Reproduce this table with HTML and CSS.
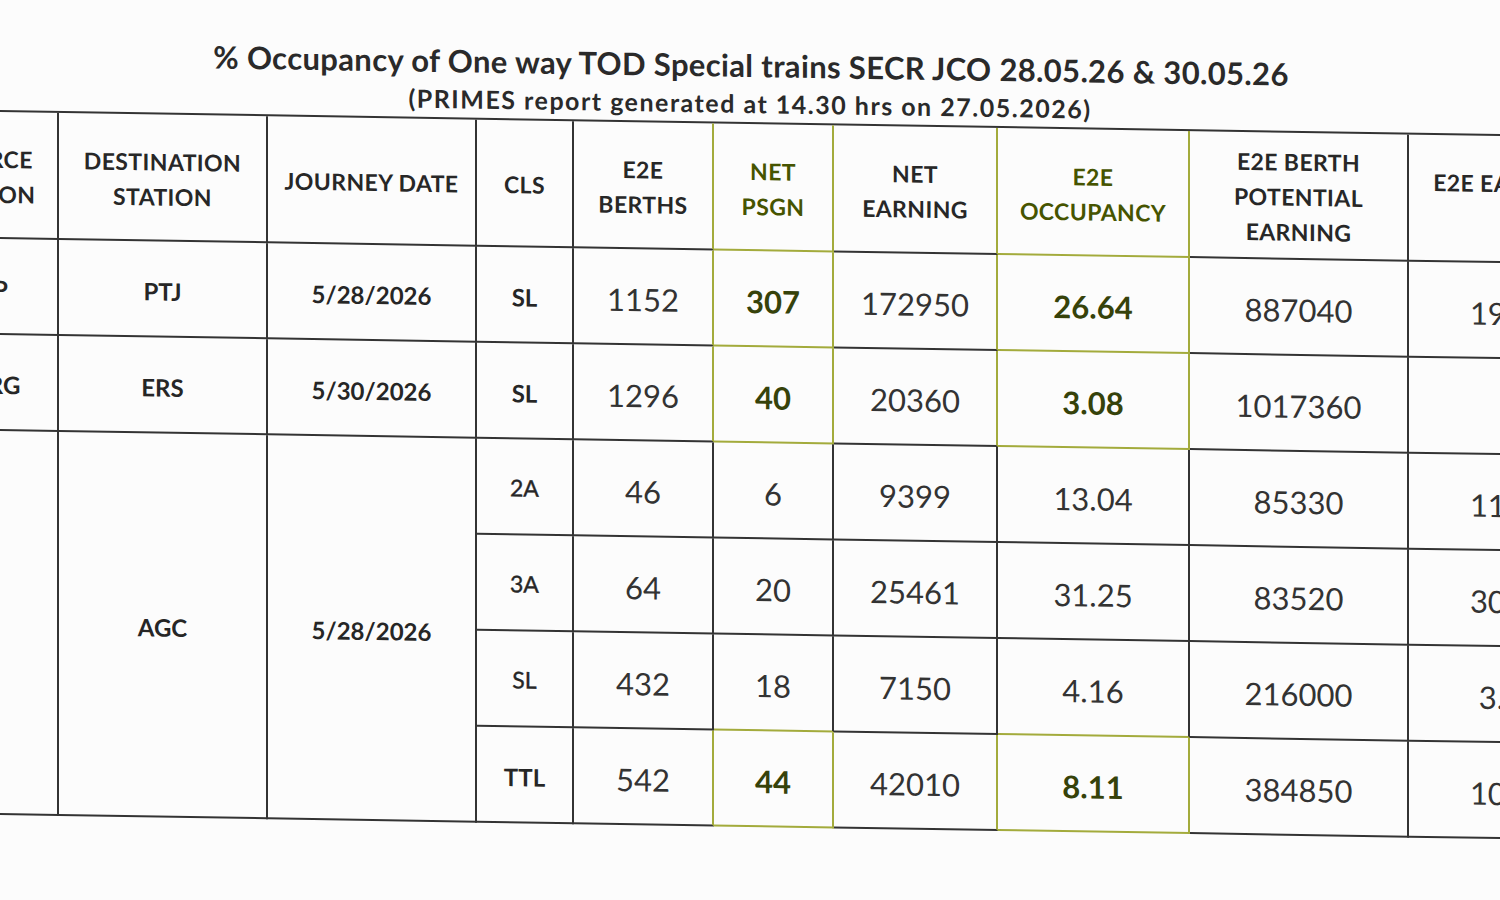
FILE: index.html
```html
<!DOCTYPE html>
<html lang="en">
<head>
<meta charset="utf-8">
<title>% Occupancy of One way TOD Special trains</title>
<link rel="stylesheet" href="styles.css">
</head>
<body>
<div class="page">
  <div class="sheet">
    <h1 class="title">% Occupancy of One way TOD Special trains SECR JCO 28.05.26 &amp; 30.05.26</h1>
    <p class="subtitle">(PRIMES report generated at 14.30 hrs on 27.05.2026)</p>
    <table class="occ">
      <colgroup>
        <col class="c1"><col class="c2"><col class="c3"><col class="c4"><col class="c5">
        <col class="c6"><col class="c7"><col class="c8"><col class="c9"><col class="c10">
      </colgroup>
      <thead>
        <tr class="head">
          <th>SOURCE<br>STATION</th>
          <th>DESTINATION<br>STATION</th>
          <th>JOURNEY DATE</th>
          <th>CLS</th>
          <th class="gl">E2E<br>BERTHS</th>
          <th class="g gtxt">NET<br>PSGN</th>
          <th class="gl">NET<br>EARNING</th>
          <th class="g gtxt">E2E<br>OCCUPANCY</th>
          <th>E2E BERTH<br>POTENTIAL<br>EARNING</th>
          <th>E2E EARNING<br>%</th>
        </tr>
      </thead>
      <tbody>
        <tr>
          <td class="lbl">BSP</td>
          <td class="lbl">PTJ</td>
          <td class="lbl">5/28/2026</td>
          <td class="lbl">SL</td>
          <td class="num gl">1152</td>
          <td class="num g hl">307</td>
          <td class="num gl">172950</td>
          <td class="num g hl">26.64</td>
          <td class="num">887040</td>
          <td class="num">19.50</td>
        </tr>
        <tr>
          <td class="lbl">DURG</td>
          <td class="lbl">ERS</td>
          <td class="lbl">5/30/2026</td>
          <td class="lbl">SL</td>
          <td class="num gl">1296</td>
          <td class="num g hl">40</td>
          <td class="num gl">20360</td>
          <td class="num g hl">3.08</td>
          <td class="num">1017360</td>
          <td class="num"></td>
        </tr>
        <tr>
          <td class="lbl" rowspan="4"></td>
          <td class="lbl" rowspan="4">AGC</td>
          <td class="lbl" rowspan="4">5/28/2026</td>
          <td class="cls">2A</td>
          <td class="num">46</td>
          <td class="num">6</td>
          <td class="num">9399</td>
          <td class="num">13.04</td>
          <td class="num">85330</td>
          <td class="num">11.01</td>
        </tr>
        <tr>
          <td class="cls">3A</td>
          <td class="num">64</td>
          <td class="num">20</td>
          <td class="num">25461</td>
          <td class="num">31.25</td>
          <td class="num">83520</td>
          <td class="num">30.48</td>
        </tr>
        <tr>
          <td class="cls">SL</td>
          <td class="num">432</td>
          <td class="num gt">18</td>
          <td class="num">7150</td>
          <td class="num gt">4.16</td>
          <td class="num">216000</td>
          <td class="num">3.31</td>
        </tr>
        <tr>
          <td class="lbl ttl">TTL</td>
          <td class="num gl">542</td>
          <td class="num g hl">44</td>
          <td class="num gl">42010</td>
          <td class="num g hl">8.11</td>
          <td class="num">384850</td>
          <td class="num">10.92</td>
        </tr>
      </tbody>
    </table>
  </div>
</div>
</body>
</html>
```

FILE: styles.css
```css
html, body {
  margin: 0;
  padding: 0;
  background: #fcfcfc;
}

.page {
  width: 1500px;
  height: 900px;
  overflow: hidden;
  font-family: "Lato", "Open Sans", "Liberation Sans", sans-serif;
  color: #262626;
}

.sheet {
  transform: skewY(0.92deg);
  transform-origin: 0 0;
  padding-top: 35px;
}

.title {
  margin: 0;
  text-align: center;
  font-size: 31px;
  line-height: 36px;
  font-weight: 700;
  letter-spacing: 0.35px;
  color: #2a2a2a;
  padding-left: 2px;
}

.subtitle {
  margin: 6px 0 0;
  text-align: center;
  font-size: 25px;
  line-height: 28px;
  font-weight: 700;
  letter-spacing: 1.5px;
  color: #2a2a2a;
}

.occ {
  margin-top: 5px;
  margin-left: -87px;
  border-collapse: separate;
  border-spacing: 0;
  table-layout: fixed;
  width: 1699px;
  border-top: 2px solid #333;
  border-left: 2px solid #333;
}

.c1 { width: 144px; }
.c2 { width: 209px; }
.c3 { width: 209px; }
.c4 { width: 97px; }
.c5 { width: 140px; }
.c6 { width: 120px; }
.c7 { width: 164px; }
.c8 { width: 192px; }
.c9 { width: 219px; }
.c10 { width: 203px; }

.occ th,
.occ td {
  box-sizing: border-box;
  padding: 0;
  text-align: center;
  vertical-align: middle;
  border-right: 2px solid #333;
  border-bottom: 2px solid #333;
}

.occ th {
  height: 127px;
  padding-top: 4px;
  font-size: 23px;
  line-height: 35px;
  font-weight: 700;
  color: #272727;
  letter-spacing: 0.4px;
}

.occ td {
  height: 96px;
}

.lbl {
  font-size: 24px;
  font-weight: 700;
  color: #262626;
}

.cls {
  font-size: 23px;
  font-weight: 400;
  color: #262626;
  -webkit-text-stroke: 0.4px #262626;
}

.num {
  font-size: 31px;
  font-weight: 400;
  color: #333;
}

.occ td.num {
  padding-top: 6px;
}

.occ td.lbl {
  padding-top: 4px;
}

.occ td.cls {
  padding-top: 2px;
}

.occ .g {
  border-right-color: #a3ab3c;
  border-bottom-color: #a3ab3c;
}

.occ .gl {
  border-right-color: #a3ab3c;
}

.occ .gt {
  border-bottom-color: #a3ab3c;
}

.occ .gtxt {
  color: #465400;
}

.hl {
  font-weight: 700;
  color: #36420a;
}
```
